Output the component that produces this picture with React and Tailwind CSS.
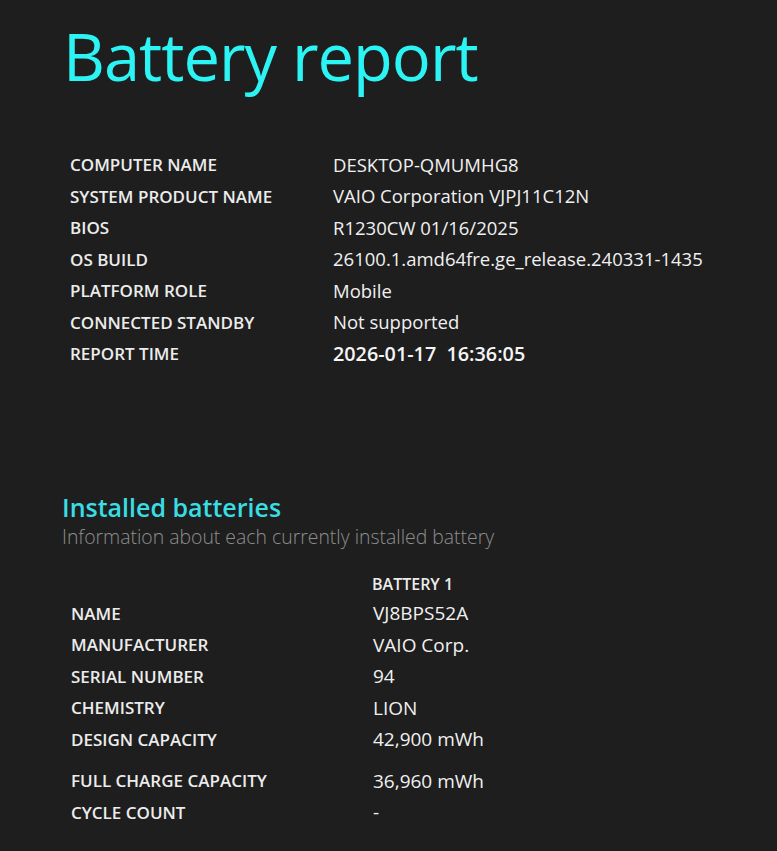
export default function App() {
  const sys = [
    ["COMPUTER NAME", "DESKTOP-QMUMHG8"],
    ["SYSTEM PRODUCT NAME", "VAIO Corporation VJPJ11C12N"],
    ["BIOS", "R1230CW 01/16/2025"],
    ["OS BUILD", "26100.1.amd64fre.ge_release.240331-1435"],
    ["PLATFORM ROLE", "Mobile"],
    ["CONNECTED STANDBY", "Not supported"],
  ];
  const bat = [
    ["NAME", "VJ8BPS52A"],
    ["MANUFACTURER", "VAIO Corp."],
    ["SERIAL NUMBER", "94"],
    ["CHEMISTRY", "LION"],
    ["DESIGN CAPACITY", "42,900 mWh"],
  ];
  const font = { fontFamily: '"Open Sans", "Noto Sans", sans-serif' };
  return (
    <div className="min-h-[851px] w-full bg-[#1e1e1e] text-[#f2f2f2]" style={font}>
      <div className="pl-[63px] pt-[14px]">
        <h1 className="text-[65px] leading-[84px] text-[#2cf4f4] font-normal tracking-[-1px]">Battery report</h1>
      </div>
      <div className="mt-[51px] pl-[70px] flex flex-col">
        {sys.map(([k, v]) => (
          <div key={k} className="flex h-[31.5px] items-center">
            <div className="w-[263px] text-[17px] font-semibold text-[#ececec]">{k}</div>
            <div className="text-[18.5px] text-[#f0f0f0]">{v}</div>
          </div>
        ))}
        <div className="flex h-[31.5px] items-center">
          <div className="w-[263px] text-[17px] font-semibold text-[#ececec]">REPORT TIME</div>
          <div className="text-[19.8px] font-semibold text-[#f5f5f5] whitespace-pre">{"2026-01-17  16:36:05"}</div>
        </div>
      </div>
      <div className="mt-[122px] pl-[62px]">
        <h2 className="text-[25px] leading-[30px] font-semibold text-[#3adde4]">Installed batteries</h2>
        <p className="text-[19.4px] leading-[30px] font-light text-[#8e8e8e]">Information about each currently installed battery</p>
      </div>
      <div className="mt-[18px] pl-[71px] flex flex-col">
        <div className="flex h-[28px] items-center">
          <div className="w-[301px]"></div>
          <div className="text-[16px] font-semibold text-[#ececec]">BATTERY 1</div>
        </div>
        {bat.map(([k, v]) => (
          <div key={k} className="flex h-[31.5px] items-center">
            <div className="w-[302px] text-[17px] font-semibold text-[#ececec]">{k}</div>
            <div className="text-[19px] text-[#f0f0f0]">{v}</div>
          </div>
        ))}
        <div className="flex h-[31.5px] items-center mt-[10px]">
          <div className="w-[302px] text-[17px] font-semibold text-[#ececec]">FULL CHARGE CAPACITY</div>
          <div className="text-[19px] text-[#f0f0f0]">36,960 mWh</div>
        </div>
        <div className="flex h-[31.5px] items-center">
          <div className="w-[302px] text-[17px] font-semibold text-[#ececec]">CYCLE COUNT</div>
          <div className="text-[19px] text-[#f0f0f0]">-</div>
        </div>
      </div>
    </div>
  );
}
